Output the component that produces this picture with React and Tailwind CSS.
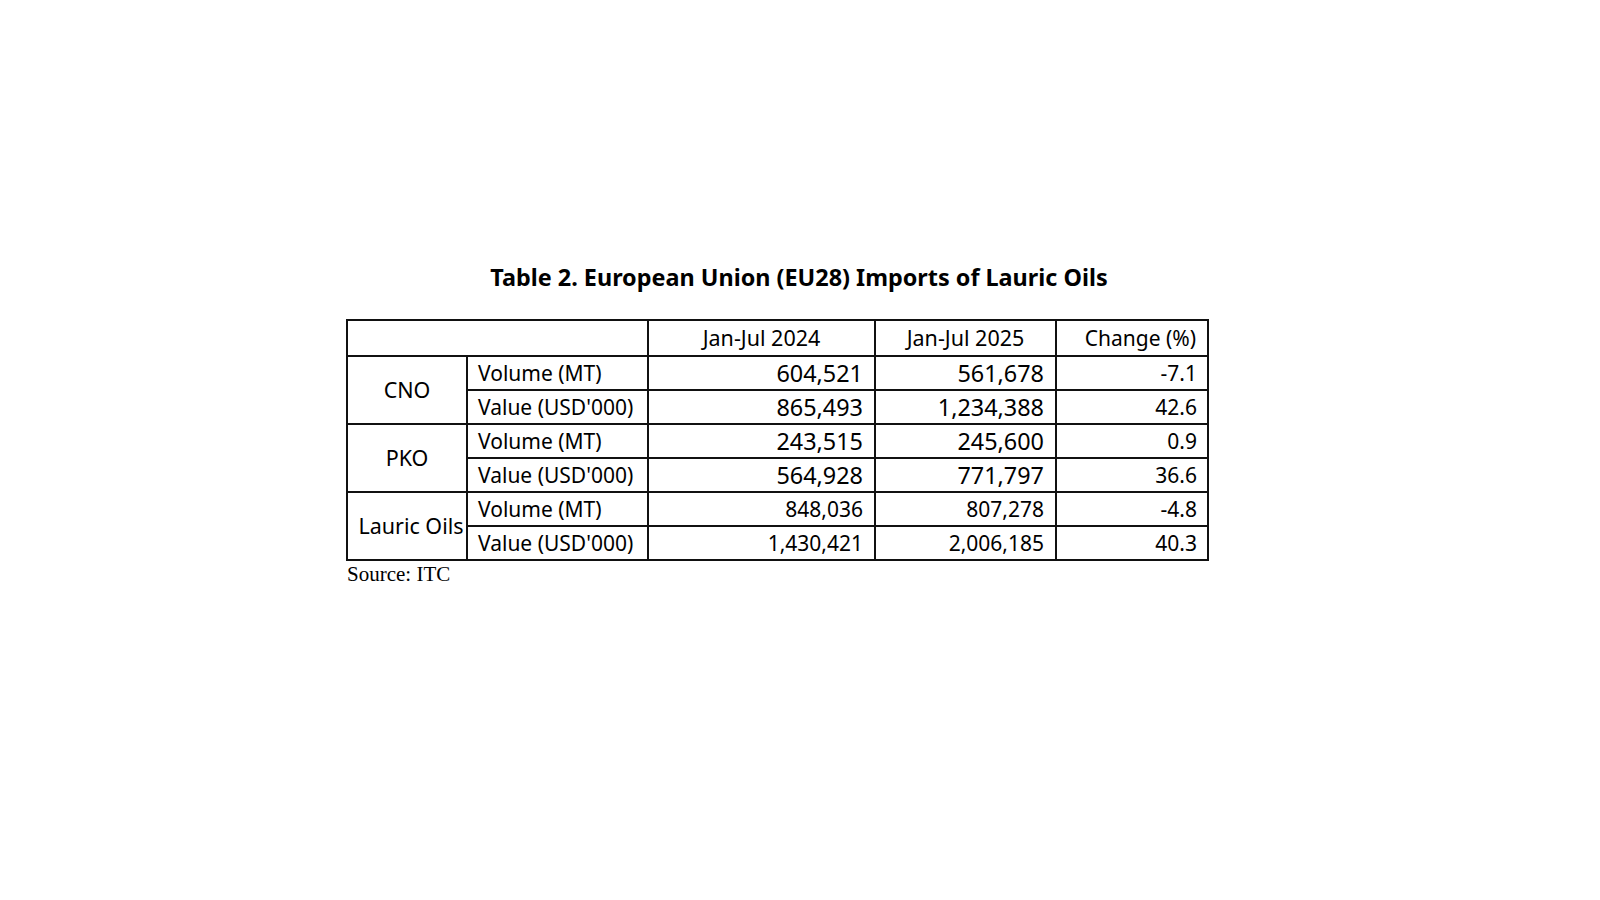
import React from 'react';

// big = the CNO / PKO figures are set a size up in the source table
const rows = [
  { group: 'CNO', big: true, items: [
    { label: 'Volume (MT)', a: '604,521', b: '561,678', c: '-7.1' },
    { label: "Value (USD'000)", a: '865,493', b: '1,234,388', c: '42.6' },
  ]},
  { group: 'PKO', big: true, items: [
    { label: 'Volume (MT)', a: '243,515', b: '245,600', c: '0.9' },
    { label: "Value (USD'000)", a: '564,928', b: '771,797', c: '36.6' },
  ]},
  { group: 'Lauric Oils', big: false, items: [
    { label: 'Volume (MT)', a: '848,036', b: '807,278', c: '-4.8' },
    { label: "Value (USD'000)", a: '1,430,421', b: '2,006,185', c: '40.3' },
  ]},
];

export default function App() {
  return (
    <div className="w-[1600px] h-[900px] bg-white text-black pt-[262px] font-['Noto_Sans',sans-serif]">
      {/* Title */}
      <h1 className="text-center font-bold text-[23.4px] leading-[31px] pr-[2px]">
        Table 2. European Union (EU28) Imports of Lauric Oils
      </h1>

      <div className="ml-[346px] mt-[26px]">
        <table className="table-fixed border-collapse border-2 border-[#111] text-[21px] leading-[28px]">
          <colgroup>
            <col className="w-[120px]" />
            <col className="w-[181px]" />
            <col className="w-[227px]" />
            <col className="w-[181px]" />
            <col className="w-[152px]" />
          </colgroup>
          <thead>
            <tr className="h-[36px]">
              <th colSpan={2} className="border-2 border-[#111]"></th>
              <th className="border-2 border-[#111] font-normal text-center text-[21.5px]">Jan-Jul 2024</th>
              <th className="border-2 border-[#111] font-normal text-center text-[21.5px]">Jan-Jul 2025</th>
              <th className="border-2 border-[#111] font-normal text-right pr-[11px]">Change (%)</th>
            </tr>
          </thead>
          <tbody>
            {rows.map((g) =>
              g.items.map((r, i) => (
                <tr key={g.group + i} className="h-[34px]">
                  {i === 0 && (
                    <td
                      rowSpan={2}
                      className={`border-2 border-[#111] text-center whitespace-nowrap text-[21.5px] ${g.big ? '' : 'pl-[8px]'}`}
                    >
                      {g.group}
                    </td>
                  )}
                  <td className="border-2 border-[#111] pl-[10px] whitespace-nowrap">{r.label}</td>
                  <td className={`border-2 border-[#111] text-right pr-[11px] ${g.big ? 'text-[23.4px]' : ''}`}>{r.a}</td>
                  <td className={`border-2 border-[#111] text-right pr-[11px] ${g.big ? 'text-[23.4px]' : ''}`}>{r.b}</td>
                  <td className="border-2 border-[#111] text-right pr-[10px]">{r.c}</td>
                </tr>
              ))
            )}
          </tbody>
        </table>
        <p className="mt-[1px] ml-[1px] font-['Liberation_Serif',serif] text-[21px] leading-[24px]">Source: ITC</p>
      </div>
    </div>
  );
}
